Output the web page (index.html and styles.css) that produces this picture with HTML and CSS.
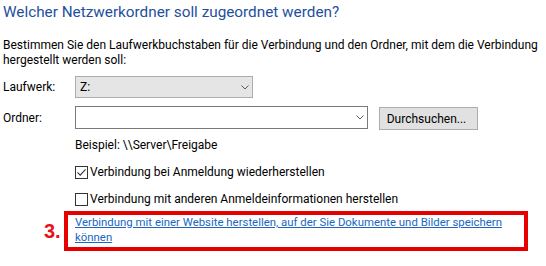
FILE: index.html
```html
<!DOCTYPE html>
<html lang="de">
<head>
    <meta charset="UTF-8">
    <title>Netzlaufwerk verbinden</title>
    <link rel="stylesheet" href="styles.css">
</head>
<body>
    <div class="wizard">
        <h1 class="wizard-title">Welcher Netzwerkordner soll zugeordnet werden?</h1>

        <p class="intro">Bestimmen Sie den Laufwerkbuchstaben für die Verbindung und den Ordner, mit dem die Verbindung hergestellt werden soll:</p>

        <div class="form-grid">
            <label class="field-label">Laufwerk:</label>
            <div class="combo combo-drive">
                <span>Z:</span>
                <svg class="chevron" width="8" height="5" viewBox="0 0 8 5"><path d="M0.5 0.5 L4 4 L7.5 0.5" fill="none" stroke="#5a5a5a" stroke-width="1"/></svg>
            </div>

            <label class="field-label">Ordner:</label>
            <div class="folder-row">
                <div class="combo combo-folder">
                    <span></span>
                    <svg class="chevron" width="8" height="5" viewBox="0 0 8 5"><path d="M0.5 0.5 L4 4 L7.5 0.5" fill="none" stroke="#5a5a5a" stroke-width="1"/></svg>
                </div>
                <button class="btn">Durchsuchen...</button>
            </div>

            <span></span>
            <div class="example">Beispiel: \\Server\Freigabe</div>

            <span></span>
            <label class="check">
                <span class="box">
                    <svg width="11" height="11" viewBox="0 0 11 11"><path d="M1.5 5.3 L4.2 8.2 L9.6 2.4" fill="none" stroke="#333" stroke-width="1.1"/></svg>
                </span>
                Verbindung bei Anmeldung wiederherstellen
            </label>

            <span></span>
            <label class="check">
                <span class="box"></span>
                Verbindung mit anderen Anmeldeinformationen herstellen
            </label>
        </div>

        <div class="step">
            <span class="step-num">3.</span>
            <div class="step-box">
                <a href="#">Verbindung mit einer Website herstellen, auf der Sie Dokumente und Bilder speichern können</a>
            </div>
        </div>
    </div>
</body>
</html>
```

FILE: styles.css
```css
body {
    margin: 0;
    background: #fff;
    font-family: 'Roboto', 'Open Sans', sans-serif;
    font-size: 12px;
    color: #000;
}

.wizard {
    padding: 2px 0 0 3px;
}

.wizard-title {
    margin: 0;
    font-size: 15.3px;
    font-weight: normal;
    color: #1f4f9e;
    line-height: 20px;
}

.intro {
    margin: 16px 0 0;
    line-height: 15px;
}

.form-grid {
    display: grid;
    grid-template-columns: 72px auto;
    row-gap: 8px;
    margin-top: 8px;
    align-items: center;
}

.combo {
    display: flex;
    align-items: center;
    justify-content: space-between;
    box-sizing: border-box;
    padding: 0 3px 0 4px;
}

.combo-drive {
    width: 178px;
    height: 22px;
    background: #e5e5e5;
    border: 1px solid #adadad;
}

.combo-folder {
    width: 293px;
    height: 23px;
    background: #fff;
    border: 1px solid #7a7a7a;
}

.folder-row {
    display: flex;
    align-items: flex-start;
    gap: 11px;
}

.btn {
    width: 99px;
    height: 23px;
    margin-top: 1px;
    background: #e1e1e1;
    border: 1px solid #adadad;
    font-family: inherit;
    font-size: 12px;
    padding: 0 4px 0 0;
    color: #000;
}

.example {
    line-height: 15px;
}

.check {
    display: flex;
    align-items: center;
    gap: 2px;
    height: 16px;
    margin-top: 3px;
}

.box {
    width: 13px;
    height: 13px;
    box-sizing: border-box;
    border: 1px solid #333;
    display: flex;
    align-items: center;
    justify-content: center;
}

.step {
    display: flex;
    align-items: center;
    margin-top: 4px;
    margin-left: 41px;
}

.step-num {
    color: #e8101a;
    font-weight: bold;
    font-size: 20px;
    width: 20px;
    font-family: 'Liberation Sans', Arial, sans-serif;
}

.step-box {
    box-sizing: border-box;
    border: 4px solid #e60000;
    width: 464px;
    height: 40px;
    padding: 0 0 0 7px;
    line-height: 15px;
}

.step-box a {
    color: #1a66c2;
    font-size: 11.4px;
}
```
